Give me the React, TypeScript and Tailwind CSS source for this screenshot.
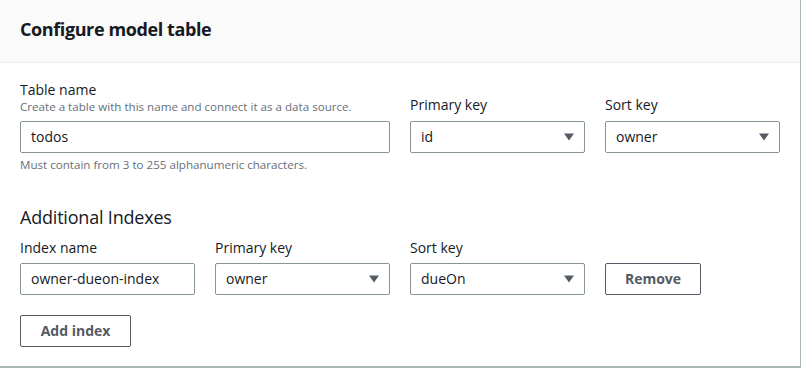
import React from 'react'

const font = { fontFamily: '"Open Sans", "Liberation Sans", sans-serif' }

function Caret() {
    return (
        <svg width="10" height="8" viewBox="0 0 10 8" className="shrink-0">
            <path d="M0 0.5 L10 0.5 L5 7.5 Z" fill="#545b64" />
        </svg>
    )
}

function Select({ value }: { value: string }) {
    return (
        <div className="flex items-center justify-between h-8 px-[10px] border border-[#879596] rounded-[2px] bg-white text-sm text-[#16191f]">
            <span>{value}</span>
            <Caret />
        </div>
    )
}

function TextInput({ value }: { value: string }) {
    return (
        <div className="flex items-center h-8 px-[10px] border border-[#879596] rounded-[2px] bg-white text-sm text-[#16191f]">
            {value}
        </div>
    )
}

function Button({ children, className = '' }: { children: React.ReactNode; className?: string }) {
    return (
        <button className={`h-8 border border-[#545b64] rounded-[2px] bg-white text-sm font-bold text-[#545b64] ${className}`}>
            {children}
        </button>
    )
}

function Label({ children }: { children: React.ReactNode }) {
    return <label className="block text-sm leading-5 text-[#16191f]">{children}</label>
}

export default function App() {
    return (
        <div style={font} className="w-[801px] h-[368px] bg-white border-r border-b-2 border-[#aab7b8] flex flex-col">
            <div className="h-[63px] bg-[#fafafa] border-b border-[#eaeded] px-5 flex items-center">
                <h2 className="text-[18px] font-bold tracking-[-0.4px] text-[#16191f] leading-none pb-1">Configure model table</h2>
            </div>

            <div className="px-5 pt-[17px]">
                <div className="grid grid-cols-4 gap-x-5">
                    <div className="col-span-2">
                        <Label>Table name</Label>
                        <p className="text-[11.6px] leading-[14px] text-[#687078] mb-[7px]">
                            Create a table with this name and connect it as a data source.
                        </p>
                        <TextInput value="todos" />
                        <p className="text-[11.6px] leading-[14px] text-[#687078] mt-[5px]">
                            Must contain from 3 to 255 alphanumeric characters.
                        </p>
                    </div>
                    <div className="pt-[15px]">
                        <Label>Primary key</Label>
                        <div className="mt-[6px]">
                            <Select value="id" />
                        </div>
                    </div>
                    <div className="pt-[15px]">
                        <Label>Sort key</Label>
                        <div className="mt-[6px]">
                            <Select value="owner" />
                        </div>
                    </div>
                </div>

                <h3 className="mt-[33px] text-[18px] leading-[24px] tracking-[-0.2px] text-[#16191f]">Additional Indexes</h3>

                <div className="grid grid-cols-4 gap-x-5 mt-[9px] items-end">
                    <div>
                        <Label>Index name</Label>
                        <div className="mt-[5px]">
                            <TextInput value="owner-dueon-index" />
                        </div>
                    </div>
                    <div>
                        <Label>Primary key</Label>
                        <div className="mt-[5px]">
                            <Select value="owner" />
                        </div>
                    </div>
                    <div>
                        <Label>Sort key</Label>
                        <div className="mt-[5px]">
                            <Select value="dueOn" />
                        </div>
                    </div>
                    <div>
                        <Button className="w-[96px]">Remove</Button>
                    </div>
                </div>

                <Button className="mt-[20px] w-[111px]">Add index</Button>
            </div>
        </div>
    )
}
